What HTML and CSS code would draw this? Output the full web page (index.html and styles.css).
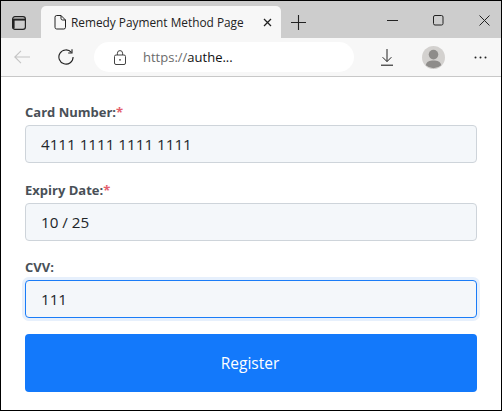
FILE: index.html
```html
<!DOCTYPE html>
<html lang="en">
<head>
    <meta charset="UTF-8">
    <meta name="viewport" content="width=device-width, initial-scale=1.0">
    <title>Remedy Payment Method Page</title>
    <link rel="stylesheet" href="styles.css">
</head>
<body>
    <div class="window">
        <div class="tab-strip">
            <svg class="tab-actions" width="16" height="16" viewBox="0 0 16 16" fill="none" stroke="#222" stroke-width="1.2">
                <rect x="1.6" y="1.6" width="12.8" height="12.8" rx="2.4"/>
                <path d="M2 4.6H14" stroke-width="2"/>
                <path d="M2.6 4V13.6" stroke-width="2"/>
            </svg>
            <div class="tab">
                <svg width="12" height="15" viewBox="0 0 12 15" fill="none" stroke="#222" stroke-width="1">
                    <path d="M1 2.2A1.7 1.7 0 0 1 2.7 .5H7L11.5 5V12.3A1.7 1.7 0 0 1 9.8 14H2.7A1.7 1.7 0 0 1 1 12.3Z"/>
                    <path d="M7 .5V3.4A1.6 1.6 0 0 0 8.6 5H11.5"/>
                </svg>
                <span class="tab-title">Remedy Payment Method Page</span>
                <svg class="tab-close" width="9" height="9" viewBox="0 0 9 9" stroke="#222" stroke-width="1.3">
                    <path d="M1 1L8 8M8 1L1 8"/>
                </svg>
            </div>
            <svg class="new-tab" width="15" height="15" viewBox="0 0 15 15" stroke="#222" stroke-width="1.1">
                <path d="M7.5 0V15M0 7.5H15"/>
            </svg>
            <div class="window-controls">
                <svg width="11" height="11" viewBox="0 0 11 11" stroke="#222" stroke-width="1"><path d="M0 5.5H11"/></svg>
                <svg width="11" height="11" viewBox="0 0 11 11" fill="none" stroke="#222" stroke-width="1"><rect x=".5" y=".5" width="9.5" height="9.5" rx="1.5"/></svg>
                <svg width="11" height="11" viewBox="0 0 11 11" stroke="#222" stroke-width="1"><path d="M.5 .5L10.5 10.5M10.5 .5L.5 10.5"/></svg>
            </div>
        </div>

        <div class="toolbar">
            <svg class="back" width="16" height="14" viewBox="0 0 16 14" fill="none" stroke="#c4c4c4" stroke-width="1.1">
                <path d="M16 7H.8M7 .8L.8 7L7 13.2"/>
            </svg>
            <svg class="reload" width="16" height="16" viewBox="0 0 16 16" fill="none" stroke="#222" stroke-width="1.1">
                <path d="M13.4 3.4A7.1 7.1 0 1 0 15.1 8"/>
                <path d="M14 .2V4H10.2"/>
            </svg>
            <div class="address-bar">
                <svg width="12" height="15" viewBox="0 0 12 15" fill="none" stroke="#444" stroke-width="1">
                    <rect x=".5" y="5" width="11" height="9.5" rx="1.5"/>
                    <path d="M3.4 5V3.2A2.6 2.6 0 0 1 8.6 3.2V5"/>
                    <circle cx="6" cy="9.8" r=".9" fill="#444" stroke="none"/>
                </svg>
                <span class="url"><span class="url-scheme">https://</span>authe...</span>
            </div>
            <svg class="download" width="12" height="17" viewBox="0 0 12 17" fill="none" stroke="#222" stroke-width="1">
                <path d="M6 0V12.5M1.6 8.2L6 12.6L10.4 8.2"/>
                <path d="M0 16.2H12" stroke-width="1.1"/>
            </svg>
            <svg class="avatar" width="23" height="23" viewBox="0 0 23 23">
                <circle cx="11.5" cy="11.5" r="11.5" fill="#d3d1cf"/>
                <circle cx="11.5" cy="8.6" r="4.8" fill="#8e8c8a"/>
                <path d="M3.8 19.2C4.4 15.4 7.6 14.4 11.5 14.4S18.6 15.4 19.2 19.2A11.5 11.5 0 0 1 3.8 19.2Z" fill="#8e8c8a"/>
            </svg>
            <svg class="more" width="13" height="3" viewBox="0 0 13 3" fill="#222">
                <circle cx="1.5" cy="1.5" r="1"/><circle cx="6.5" cy="1.5" r="1"/><circle cx="11.5" cy="1.5" r="1"/>
            </svg>
        </div>

        <form class="payment-form">
            <div class="form-group">
                <label for="card">Card Number:<span class="required">*</span></label>
                <input type="text" id="card" value="4111 1111 1111 1111"/>
            </div>
            <div class="form-group">
                <label for="expiry">Expiry Date:<span class="required">*</span></label>
                <input type="text" id="expiry" value="10 / 25"/>
            </div>
            <div class="form-group cvv-group">
                <label for="cvv">CVV:</label>
                <input type="text" id="cvv" class="focused" value="111"/>
            </div>
            <button type="button" class="register">Register</button>
        </form>
    </div>
</body>
</html>
```

FILE: styles.css
```css
* {
    margin: 0;
    padding: 0;
    box-sizing: border-box;
}

body {
    background: white;
    font-family: "Open Sans", "Noto Sans", sans-serif;
    color: #212529;
}

.window {
    width: 502px;
    height: 411px;
    border: 1px solid black;
    background: white;
    overflow: hidden;
}

/* tab strip */
.tab-strip {
    display: flex;
    align-items: flex-end;
    height: 37px;
    background: #cdcdcd;
}

.tab-actions {
    margin: 0 0 7px 10px;
}

.tab {
    display: flex;
    align-items: center;
    width: 240px;
    height: 32px;
    margin-left: 14px;
    padding: 0 9px 0 13px;
    background: #f7f7f7;
    border-radius: 5px 5px 0 0;
}

.tab-title {
    flex: 1;
    margin-left: 5px;
    font-family: "Open Sans", sans-serif;
    font-size: 11.85px;
    color: #222;
    white-space: nowrap;
}

.new-tab {
    margin: 0 0 8px 10px;
}

.window-controls {
    display: flex;
    gap: 35px;
    margin: 0 0 12px auto;
    padding-right: 11px;
}

/* toolbar */
.toolbar {
    display: flex;
    align-items: center;
    height: 39px;
    background: #f7f7f7;
    border-bottom: 1px solid #c8c8c8;
}

.back {
    margin-left: 13px;
}

.reload {
    margin-left: 28px;
}

.address-bar {
    display: flex;
    align-items: center;
    width: 260px;
    height: 30px;
    margin-left: 20px;
    padding-left: 20px;
    background: white;
    border-radius: 15px;
}

.url {
    margin-left: 17px;
    font-size: 13px;
    color: #111;
}

.url-scheme {
    color: #6b6b6b;
}

.download {
    margin-left: 27px;
}

.avatar {
    margin-left: 29px;
}

.more {
    margin-left: 29px;
}

/* form */
.payment-form {
    padding: 26px 24px 0;
}

.form-group {
    margin-bottom: 18px;
}

.cvv-group {
    margin-top: -1px;
    margin-bottom: 16px;
}

.form-group label {
    display: block;
    height: 22px;
    font-size: 13px;
    font-weight: bold;
    line-height: 18px;
    color: #495057;
}

.required {
    color: #e4606d;
}

input[type="text"] {
    display: block;
    width: 100%;
    height: 38px;
    padding: 0 15px;
    background: #f4f7fa;
    border: 1px solid #ced4da;
    border-radius: 4px;
    font-family: "Open Sans", sans-serif;
    font-size: 15.2px;
    color: #212529;
}

input[type="text"].focused {
    border-color: #1a7cf7;
    box-shadow: 0 0 0 3px #e7f0fc;
}

.register {
    display: block;
    width: 100%;
    height: 58px;
    background: #1379fb;
    border: none;
    border-radius: 4px;
    font-family: "Open Sans", sans-serif;
    font-size: 15.5px;
    color: white;
    padding-right: 2px;
}
```
